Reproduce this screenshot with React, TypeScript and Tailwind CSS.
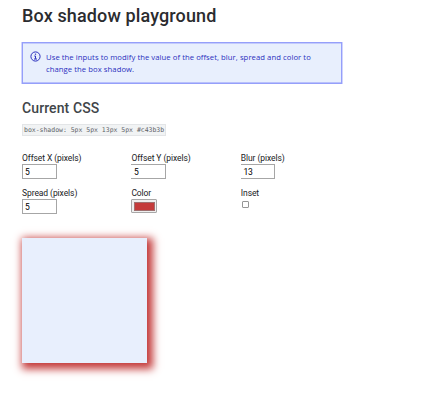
import type { ReactNode } from 'react';

function Field({ label, children }: { label: string; children: ReactNode }) {
  return (
    <label className="flex h-[35px] w-[109.4px] flex-col items-start whitespace-nowrap text-[8.5px] leading-[11px] tracking-[-0.08px] text-[#202124]">
      <span>{label}</span>
      {children}
    </label>
  );
}

function NumberInput({ value, edge = true }: { value: string; edge?: boolean }) {
  return (
    <input
      className={
        (edge ? 'w-[35px] border-l pl-[2px] ' : 'w-[34.4px] border-l-0 pl-[2.6px] ') +
        'h-[15px] border-y border-r border-[#a6a6a6] bg-white pr-[2px] text-[8.5px] leading-[13px] text-black outline-none'
      }
      defaultValue={value}
    />
  );
}

export default function App() {
  return (
    <main className="h-[402px] w-[435px] overflow-hidden bg-white pl-[22px] pt-[4px] font-['Roboto',sans-serif]">
      <h1 className="text-[18px] font-medium leading-[24px] tracking-[0.13px] text-[#2b2c2f]">Box shadow playground</h1>

      <div className="mt-[14px] flex h-[42px] w-[320px] border border-[#959ffa] bg-[#e8effd] pl-[7px] pt-[8px] text-[#2a2fbd] shadow-[-1px_0_0_#d0d4fd,1px_0_0_#d0d4fd,inset_0_1px_0_#c3cbfc,inset_0_-1px_0_#b9c1fb]">
        <svg className="h-[11px] w-[11px] shrink-0" viewBox="0 0 22 22" fill="none" stroke="currentColor" strokeWidth="2">
          <circle cx="11" cy="11" r="9.2" />
          <path d="M8.5 10H11v5.5M8 16h6" />
          <circle cx="11" cy="6.3" r="1.4" fill="currentColor" stroke="none" />
        </svg>
        <p className="ml-[5px] whitespace-nowrap font-['Open_Sans',sans-serif] text-[7.7px] leading-[12px] tracking-[0.055px]">
          Use the inputs to modify the value of the offset, blur, spread and color to
          <br />
          change the box shadow.
        </p>
      </div>

      <h2 className="mt-[15px] text-[14px] font-medium leading-[18px] tracking-[0.1px] text-[#414549]">Current CSS</h2>
      <code className="mt-[7px] flex h-[12px] w-[144px] items-center whitespace-pre border border-[#e3e5e7] bg-[#f1f3f4] pl-px font-['DejaVu_Sans_Mono',monospace] text-[6.5px] leading-[10px] tracking-[-0.02px] text-[#5f6368]">
        box-shadow: 5px 5px 13px 5px #c43b3b
      </code>

      <div className="mt-[17px] flex w-[330px] flex-wrap">
        <Field label="Offset X (pixels)"><NumberInput value="5" /></Field>
        <Field label="Offset Y (pixels)"><NumberInput value="5" edge={false} /></Field>
        <Field label="Blur (pixels)"><NumberInput value="13" edge={false} /></Field>
        <Field label="Spread (pixels)"><NumberInput value="5" /></Field>
        <Field label="Color">
          <span className="flex h-[14px] w-[26px] items-center justify-center rounded-[1px] border border-[#a8a8a8] bg-[#efefef]">
            <span className="h-[9px] w-[21px] border border-[#a07070] bg-[#c43b3b]" />
          </span>
        </Field>
        <Field label="Inset">
          <input type="checkbox" className="ml-px mt-[2px] h-[7px] w-[7px] appearance-none rounded-[1px] border border-[#969696] bg-white" />
        </Field>
      </div>

      <div className="mt-[15px] h-[125px] w-[125px] bg-[#e8effd] shadow-[3px_3px_8px_3px_#c43b3b]" />
    </main>
  );
}
